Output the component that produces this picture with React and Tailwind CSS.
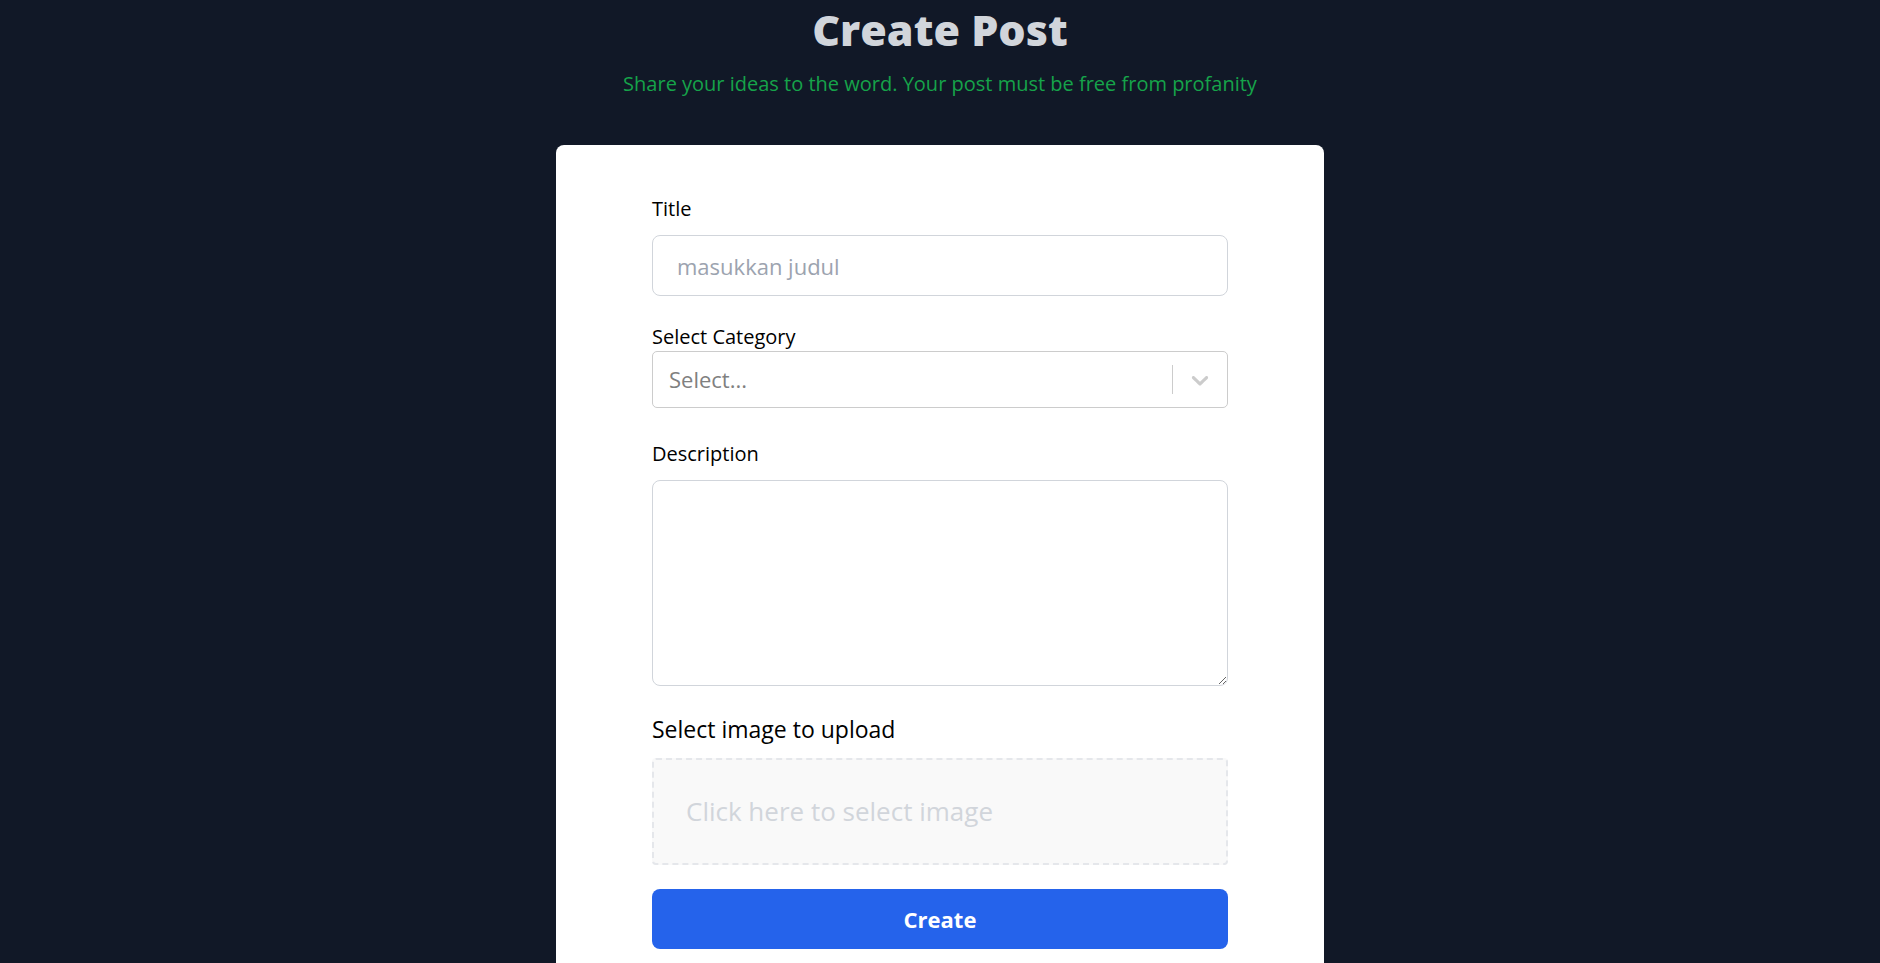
import React, { useState } from 'react';

function Chevron() {
  return (
    <svg viewBox="0 0 20 20" width="28" height="28" fill="#cccccc" aria-hidden="true">
      <path d="M4.516 7.548c0.436-0.446 1.043-0.481 1.576 0l3.908 3.747 3.908-3.747c0.533-0.481 1.141-0.446 1.574 0 0.436 0.445 0.408 1.197 0 1.615-0.406 0.418-4.695 4.502-4.695 4.502-0.217 0.223-0.502 0.335-0.787 0.335s-0.57-0.112-0.789-0.335c0 0-4.287-4.084-4.695-4.502s-0.436-1.17 0-1.615z" />
    </svg>
  );
}

export default function App() {
  const [title, setTitle] = useState('');
  const [description, setDescription] = useState('');

  return (
    <div className="min-h-screen bg-[#111827] pt-[8px] font-['Open_Sans',sans-serif]">
      <h1 className="text-center text-[43px] leading-none font-extrabold text-[#d1d5db]">Create Post</h1>
      <p className="mt-[19px] text-center text-xl text-[#16a34a]">
        Share your ideas to the word. Your post must be free from profanity
      </p>

      {/* Form card */}
      <div className="mx-auto mt-[47px] max-w-3xl rounded-lg bg-white pt-[50px] pb-10">
        <form className="mx-auto flex max-w-xl flex-col" onSubmit={(e) => e.preventDefault()}>
          <label className="mb-3 block text-xl text-black">Title</label>
          <input
            type="text"
            value={title}
            onChange={(e) => setTitle(e.target.value)}
            placeholder="masukkan judul"
            className="h-[61px] w-full rounded-lg border border-[#d1d5db] px-6 text-[22px] text-gray-900 placeholder:text-[#9ca3af] focus:outline-none"
          />

          <label className="mt-[27px] block text-xl text-black">Select Category</label>
          <div className="flex h-[57px] w-full items-center rounded-[5px] border border-[#cccccc] bg-white">
            <div className="flex-1 pl-4 text-[22px] text-[#808080]">Select...</div>
            <div className="flex items-center self-stretch py-[13px]">
              <span className="h-full w-px bg-[#cccccc]" />
              <span className="flex px-[13px]"><Chevron /></span>
            </div>
          </div>

          <label className="mt-[32px] mb-3 block text-xl text-black">Description</label>
          <textarea
            value={description}
            onChange={(e) => setDescription(e.target.value)}
            className="h-[206px] w-full rounded-lg border border-[#d1d5db] p-4 text-lg focus:outline-none"
          />

          <label className="mt-[27px] mb-[13px] block text-[23px] leading-8 text-black">Select image to upload</label>
          <div className="flex h-[107px] w-full items-center rounded-[4px] border-2 border-dashed border-[#e5e7eb] bg-[#f9f9f9] px-[32px] text-[26px] text-[#d1d5db]">
            Click here to select image
          </div>

          <button
            type="submit"
            className="mt-[24px] h-[60px] w-full rounded-lg bg-[#2563eb] text-[22px] font-bold text-white"
          >
            Create
          </button>
        </form>
      </div>
    </div>
  );
}
